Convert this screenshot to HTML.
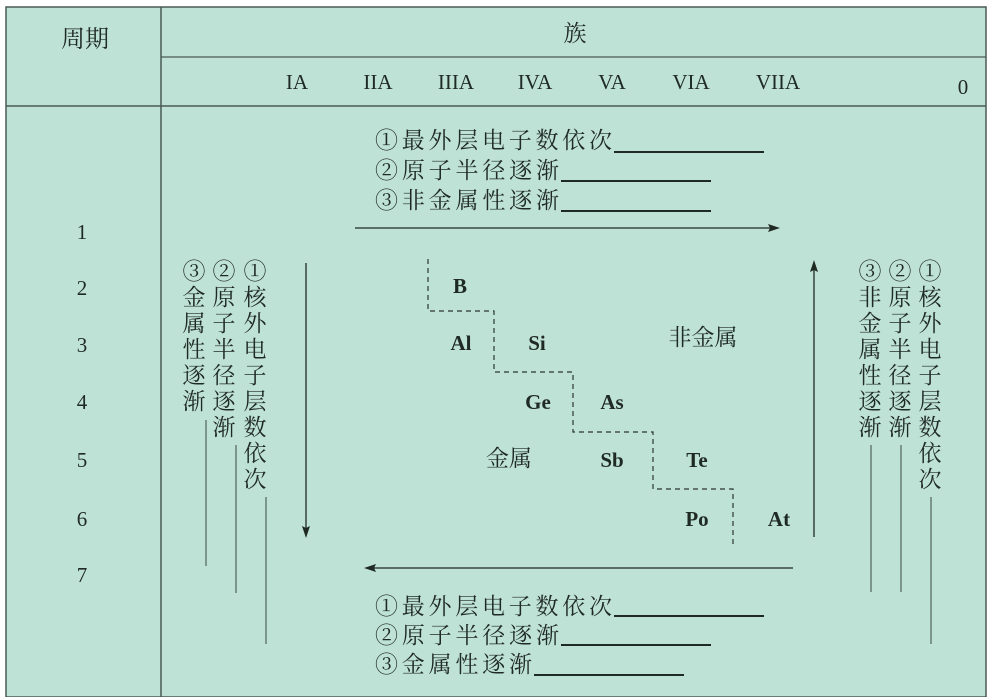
<!DOCTYPE html>
<html><head><meta charset="utf-8"><style>
html,body{margin:0;padding:0;background:#fff;}
svg{display:block;}
text{font-family:"Liberation Serif","Noto Serif CJK SC",serif;fill:#1f2a25;}
.cj{font-size:23px;}
.b{font-weight:bold;font-size:21px;}
</style></head><body>
<svg width="995" height="697" viewBox="0 0 995 697" xmlns="http://www.w3.org/2000/svg">
<rect x="6" y="7" width="980" height="690" fill="#bfe2d6" stroke="#4a5a55" stroke-width="1.5"/>
<line x1="161" y1="7" x2="161" y2="697" stroke="#4a5a55" stroke-width="1.5"/>
<line x1="161" y1="57" x2="986" y2="57" stroke="#4a5a55" stroke-width="1.2"/>
<line x1="6" y1="106" x2="986" y2="106" stroke="#4a5a55" stroke-width="1.5"/>
<text x="85" y="47" class="cj" style="font-size:24px" text-anchor="middle">周期</text>
<text x="575" y="41" class="cj" text-anchor="middle">族</text>
<g font-size="21" text-anchor="middle">
<text x="297" y="89">IA</text><text x="378" y="89">IIA</text><text x="456" y="89">IIIA</text>
<text x="535" y="89">IVA</text><text x="612" y="89">VA</text><text x="691" y="89">VIA</text>
<text x="778" y="89">VIIA</text><text x="963" y="94">0</text>
</g>
<g font-size="21" text-anchor="middle">
<text x="82" y="239">1</text><text x="82" y="295">2</text><text x="82" y="352">3</text>
<text x="82" y="409">4</text><text x="82" y="467">5</text><text x="82" y="526">6</text><text x="82" y="582">7</text>
</g>
<g class="cj">
<text x="375" y="148" textLength="237" lengthAdjust="spacing">①最外层电子数依次</text>
<text x="375" y="178" textLength="184" lengthAdjust="spacing">②原子半径逐渐</text>
<text x="375" y="208" textLength="184" lengthAdjust="spacing">③非金属性逐渐</text>
<text x="375" y="614" textLength="237" lengthAdjust="spacing">①最外层电子数依次</text>
<text x="375" y="643" textLength="184" lengthAdjust="spacing">②原子半径逐渐</text>
<text x="375" y="672" textLength="157" lengthAdjust="spacing">③金属性逐渐</text>
</g>
<g stroke="#1f2a25" stroke-width="2">
<line x1="614" y1="152" x2="764" y2="152"/><line x1="561" y1="181" x2="711" y2="181"/><line x1="561" y1="211" x2="711" y2="211"/>
<line x1="614" y1="616" x2="764" y2="616"/><line x1="561" y1="645" x2="711" y2="645"/><line x1="534" y1="675" x2="684" y2="675"/>
</g>
<g stroke="#1f2a25" stroke-width="1.3" fill="none">
<line x1="355" y1="228" x2="772" y2="228"/>
<line x1="370" y1="568" x2="793" y2="568"/>
<line x1="306" y1="263" x2="306" y2="530"/>
<line x1="814" y1="268" x2="814" y2="537"/>
</g>
<g fill="#1f2a25">
<path d="M780 228 L768 224 L770 228 L768 232 Z"/>
<path d="M364 568 L376 564 L374 568 L376 572 Z"/>
<path d="M306 538 L302 526 L306 528 L310 526 Z"/>
<path d="M814 260 L810 272 L814 270 L818 272 Z"/>
</g>
<path d="M428 259 V311 H494 V372 H573 V432 H653 V489 H733 V545" fill="none" stroke="#2a3530" stroke-width="1.2" stroke-dasharray="5,4"/>
<g class="b" text-anchor="middle">
<text x="460" y="293">B</text><text x="461" y="350">Al</text><text x="537" y="350">Si</text>
<text x="538" y="409">Ge</text><text x="612" y="409">As</text><text x="612" y="467">Sb</text>
<text x="697" y="467">Te</text><text x="697" y="526">Po</text><text x="779" y="526">At</text>
</g>
<text x="703" y="345" class="cj" text-anchor="middle">非金属</text>
<text x="509" y="466" class="cj" text-anchor="middle">金属</text>
<g class="cj" text-anchor="middle">
<text x="194" y="279">③</text><text x="194" y="305">金</text><text x="194" y="331">属</text><text x="194" y="357">性</text><text x="194" y="383">逐</text><text x="194" y="409">渐</text>
<text x="224" y="279">②</text><text x="224" y="305">原</text><text x="224" y="331">子</text><text x="224" y="357">半</text><text x="224" y="383">径</text><text x="224" y="409">逐</text><text x="224" y="435">渐</text>
<text x="255" y="279">①</text><text x="255" y="305">核</text><text x="255" y="331">外</text><text x="255" y="357">电</text><text x="255" y="383">子</text><text x="255" y="409">层</text><text x="255" y="435">数</text><text x="255" y="461">依</text><text x="255" y="487">次</text>
<text x="870" y="279">③</text><text x="870" y="305">非</text><text x="870" y="331">金</text><text x="870" y="357">属</text><text x="870" y="383">性</text><text x="870" y="409">逐</text><text x="870" y="435">渐</text>
<text x="900" y="279">②</text><text x="900" y="305">原</text><text x="900" y="331">子</text><text x="900" y="357">半</text><text x="900" y="383">径</text><text x="900" y="409">逐</text><text x="900" y="435">渐</text>
<text x="930" y="279">①</text><text x="930" y="305">核</text><text x="930" y="331">外</text><text x="930" y="357">电</text><text x="930" y="383">子</text><text x="930" y="409">层</text><text x="930" y="435">数</text><text x="930" y="461">依</text><text x="930" y="487">次</text>
</g>
<g stroke="#3a4a44" stroke-width="1">
<line x1="206" y1="420" x2="206" y2="566"/><line x1="236" y1="445" x2="236" y2="593"/><line x1="266" y1="497" x2="266" y2="644"/>
<line x1="871" y1="445" x2="871" y2="592"/><line x1="901" y1="445" x2="901" y2="592"/><line x1="931" y1="497" x2="931" y2="644"/>
</g>
</svg>
</body></html>
